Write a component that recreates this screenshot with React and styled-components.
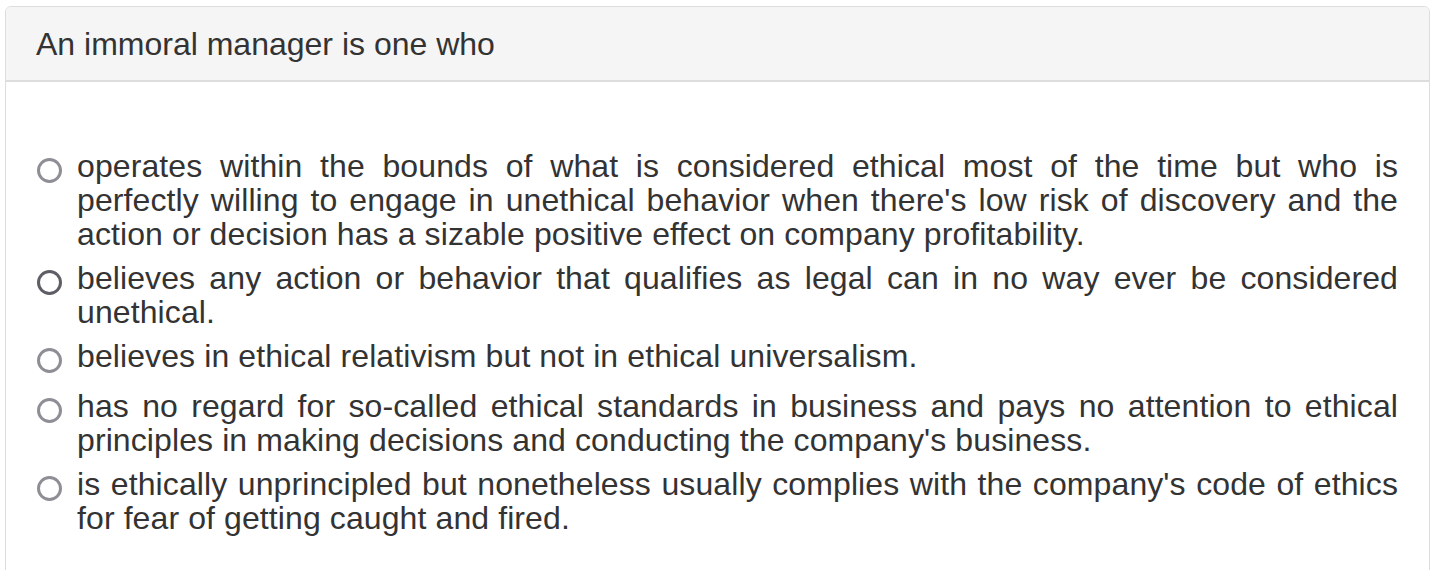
import React from 'react'
import styled, { createGlobalStyle } from 'styled-components'

const GlobalStyle = createGlobalStyle`
body{
    margin: 0;
    background: #fff;
    font-family: "Liberation Sans", Arial, Helvetica, sans-serif;
    color: #333;
}
`

const Panel = styled.div`
margin: 6px 4px 0 5px;
border: 1px solid #ddd;
border-radius: 6px;
background: #fff;
height: 600px;
overflow: hidden;
`

const Header = styled.div`
background: #f5f5f5;
border-bottom: 2px solid #ddd;
height: 75px;
padding: 2px 30px 0 30px;
box-sizing: border-box;
display: flex;
align-items: center;
font-size: 32px;
color: #333;
`

const Body = styled.div`
padding: 67px 31px 0 31px;
display: flex;
flex-direction: column;
`

const Option = styled.label`
display: flex;
align-items: flex-start;
margin-bottom: ${props => props.$gap}px;
cursor: pointer;
`

const Radio = styled.span`
flex: 0 0 auto;
box-sizing: border-box;
width: 25px;
height: 25px;
margin-top: 9px;
margin-right: 15px;
border-radius: 50%;
border: 3px solid ${props => props.$dark ? '#5e5e66' : '#8e8e96'};
background: #fff;
`

const Text = styled.span`
flex: 1;
font-size: 32px;
line-height: 34px;
letter-spacing: 0.1px;
text-align: justify;
color: #333;
`

const options = [
    { text: "operates within the bounds of what is considered ethical most of the time but who is perfectly willing to engage in unethical behavior when there's low risk of discovery and the action or decision has a sizable positive effect on company profitability.", gap: 10 },
    { text: "believes any action or behavior that qualifies as legal can in no way ever be considered unethical.", gap: 10, dark: true },
    { text: "believes in ethical relativism but not in ethical universalism.", gap: 16 },
    { text: "has no regard for so-called ethical standards in business and pays no attention to ethical principles in making decisions and conducting the company's business.", gap: 10 },
    { text: "is ethically unprincipled but nonetheless usually complies with the company's code of ethics for fear of getting caught and fired.", gap: 10 },
]

const App = () => {
    return (
        <>
            <GlobalStyle />
            <Panel>
                <Header>An immoral manager is one who</Header>
                <Body>
                    {options.map((o, i) => (
                        <Option key={i} $gap={o.gap}>
                            <Radio $dark={o.dark} />
                            <Text>{o.text}</Text>
                        </Option>
                    ))}
                </Body>
            </Panel>
        </>
    )
}

export default App
